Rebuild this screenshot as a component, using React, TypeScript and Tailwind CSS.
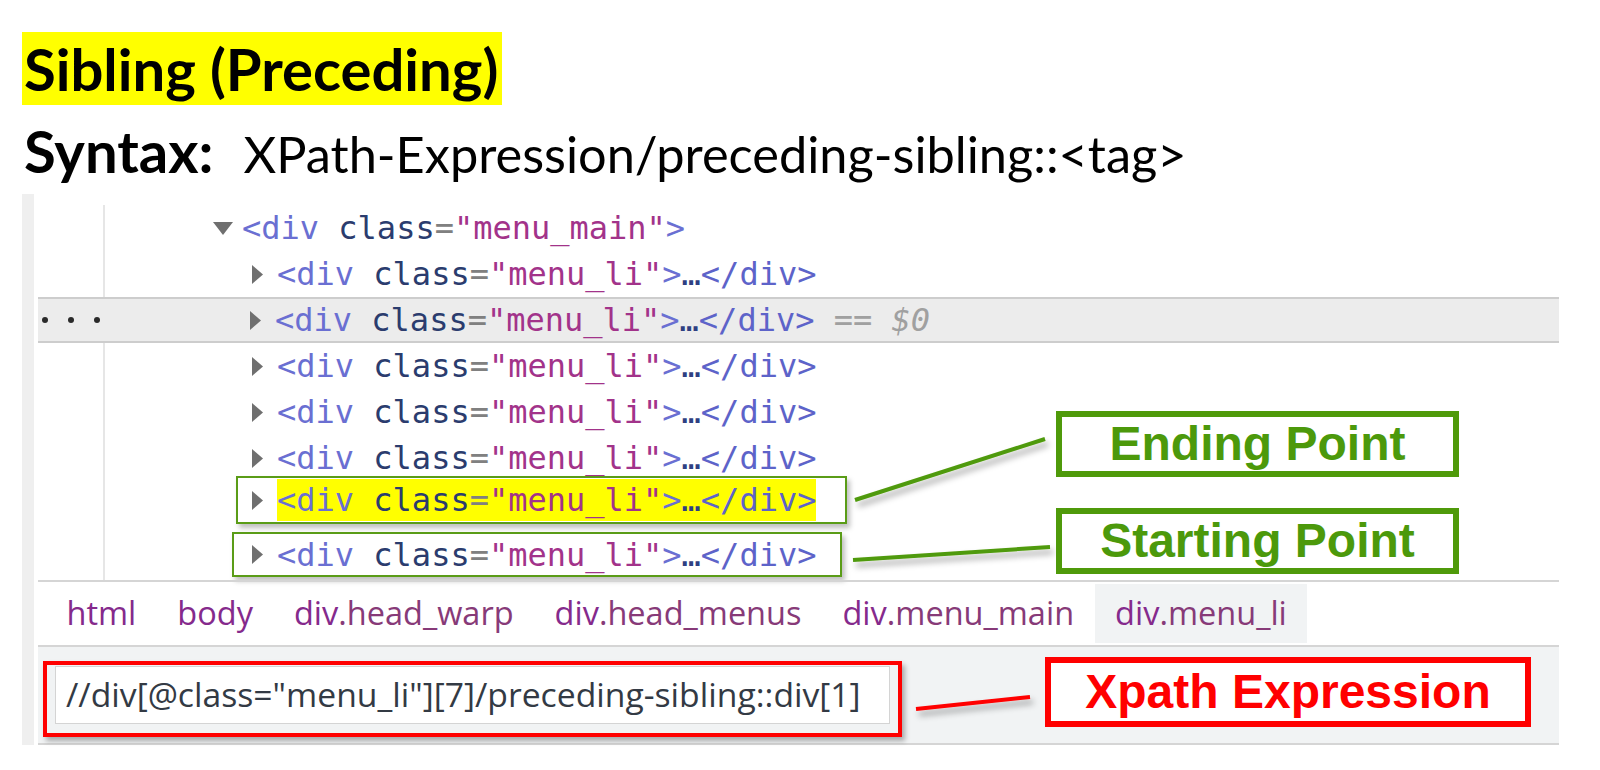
import React from "react";

// Devtools screenshot with annotations: preceding-sibling example.

const MONO = "font-['DejaVu_Sans_Mono',monospace] text-[32px] leading-none whitespace-pre";

function Down() {
  return (
    <svg width="20" height="13" viewBox="0 0 20 13" className="shrink-0">
      <polygon points="0,0 20,0 10,13" fill="#6f6f6f" />
    </svg>
  );
}

function Right() {
  return (
    <svg width="11" height="19" viewBox="0 0 11 19" className="shrink-0">
      <polygon points="0,0 11,9.5 0,19" fill="#6f6f6f" />
    </svg>
  );
}

function OpenTag({ name }: { name: string }) {
  return (
    <>
      <span className="text-[#6a6fd2]">&lt;div</span>{" "}
      <span className="text-[#2b3c6e]">class</span>
      <span className="text-[#808080]">=</span>
      <span className="text-[#a2338a]">"{name}"</span>
      <span className="text-[#6a6fd2]">&gt;</span>
    </>
  );
}

function LiText({ yellow }: { yellow?: boolean }) {
  return (
    <span className={yellow ? `${MONO} bg-[#ffff00] py-[5px]` : MONO}>
      <OpenTag name="menu_li" />
      <span className="text-[#2f3f82]">…</span>
      <span className="text-[#5d63c9]">&lt;/div&gt;</span>
    </span>
  );
}

function Row({
  selected,
  children,
}: {
  selected?: boolean;
  children: React.ReactNode;
}) {
  return (
    <div
      className={
        selected
          ? "flex h-[46px] border-y-2 border-[#cdcdcd] bg-[#ececec]"
          : "flex h-[46px]"
      }
    >
      <div className="flex w-[65px] items-center gap-[20px] pl-[4px]">
        {selected && (
          <>
            <span className="h-[6px] w-[6px] rounded-full bg-[#2a2a2a]" />
            <span className="h-[6px] w-[6px] rounded-full bg-[#2a2a2a]" />
            <span className="h-[6px] w-[6px] rounded-full bg-[#2a2a2a]" />
          </>
        )}
      </div>
      <div
        className={
          selected
            ? "flex flex-1 items-center border-l-2 border-transparent"
            : "flex flex-1 items-center border-l-2 border-[#e6e6e6]"
        }
      >
        {children}
      </div>
    </div>
  );
}

function Crumb({ tag, cls, active }: { tag: string; cls?: string; active?: boolean }) {
  return (
    <div
      className={
        active
          ? "flex h-[59px] items-center bg-[#f1f3f4] px-[20.5px]"
          : "flex h-[59px] items-center px-[20.5px]"
      }
    >
      <span className="text-[#852a8c]">{tag}</span>
      {cls && <span className="text-[#873a78]">{cls}</span>}
    </div>
  );
}

function Panel() {
  return (
    <div className="flex h-[551px]">
      <div className="w-[12px] bg-[#efefef]" />
      <div className="w-[4px]" />
      <div className="flex w-[1521px] flex-col">
        {/* elements tree */}
        <div className="flex h-[386px] flex-col pt-[11px]">
          <Row>
            <div className="flex items-center gap-[9px] pl-[108px]">
              <Down />
              <span className={MONO}>
                <OpenTag name="menu_main" />
              </span>
            </div>
          </Row>
          <Row>
            <div className="flex items-center gap-[14px] pl-[147px]">
              <Right />
              <LiText />
            </div>
          </Row>
          <Row selected>
            <div className="flex items-center gap-[14px] pl-[145px]">
              <Right />
              <LiText />
              <span className={`${MONO} -ml-[14px] italic text-[#a0a0a0]`}> == $0</span>
            </div>
          </Row>
          <Row>
            <div className="flex items-center gap-[14px] pl-[147px]">
              <Right />
              <LiText />
            </div>
          </Row>
          <Row>
            <div className="flex items-center gap-[14px] pl-[147px]">
              <Right />
              <LiText />
            </div>
          </Row>
          <Row>
            <div className="flex items-center gap-[14px] pl-[147px]">
              <Right />
              <LiText />
            </div>
          </Row>
          <Row>
            <div className="mb-[8px] ml-[131px] flex h-[48px] items-center gap-[14px] border-2 border-[#5a9c17] bg-white pl-[14px] pr-[29px] shadow-[3px_4px_5px_rgba(0,0,0,0.25)]">
              <Right />
              <LiText yellow />
            </div>
          </Row>
          <Row>
            <div className="mt-[9px] ml-[127px] flex h-[45px] items-center gap-[14px] border-2 border-[#5a9c17] bg-white pl-[18px] pr-[24px] shadow-[3px_4px_5px_rgba(0,0,0,0.25)]">
              <Right />
              <LiText />
            </div>
          </Row>
          <div className="flex flex-1">
            <div className="w-[65px]" />
            <div className="flex-1 border-l-2 border-[#e6e6e6]" />
          </div>
        </div>

        {/* breadcrumbs */}
        <div className="flex h-[65px] items-end border-t-2 border-[#d5d5d5] pb-[2px] pl-[8px] font-['Open_Sans',sans-serif] text-[32.5px] leading-none">
          <Crumb tag="html" />
          <Crumb tag="body" />
          <Crumb tag="div" cls=".head_warp" />
          <Crumb tag="div" cls=".head_menus" />
          <Crumb tag="div" cls=".menu_main" />
          <Crumb tag="div" cls=".menu_li" active />
        </div>

        {/* xpath search bar */}
        <div className="flex-1 border-y-2 border-[#d5d5d5] bg-[#f1f3f4] pl-[5px] pt-[14px]">
          <div className="h-[76px] w-[859px] border-4 border-[#ff0000] bg-[#f1f3f4] px-[8px] pt-[1px] shadow-[3px_4px_5px_rgba(0,0,0,0.3)]">
            <div className="flex h-[58px] items-center border border-[#d4d4d4] bg-white pl-[10px] font-['Open_Sans',sans-serif] text-[33.7px] leading-none text-[#333a44]">
              //div[@class="menu_li"][7]/preceding-sibling::div[1]
            </div>
          </div>
        </div>
      </div>
    </div>
  );
}

function Callouts() {
  return (
    <>
      <svg
        className="pointer-events-none absolute left-0 top-0"
        width="1600"
        height="770"
      >
        <defs>
          <filter
            id="sh"
            filterUnits="userSpaceOnUse"
            x="0"
            y="0"
            width="1600"
            height="770"
          >
            <feDropShadow dx="3" dy="5" stdDeviation="3" floodColor="#000" floodOpacity="0.35" />
          </filter>
        </defs>
        <line x1="855" y1="500" x2="1045" y2="439" stroke="#4f9a0a" strokeWidth="4" filter="url(#sh)" />
        <line x1="853" y1="560" x2="1050" y2="547" stroke="#4f9a0a" strokeWidth="4" filter="url(#sh)" />
        <line x1="916" y1="709" x2="1030" y2="697" stroke="#ff0000" strokeWidth="4" filter="url(#sh)" />
      </svg>
      <div className="absolute left-[1056px] top-[411px] flex h-[66px] w-[403px] items-center justify-center border-[6px] border-[#4f9a0a] bg-white font-['Liberation_Sans',sans-serif] text-[48px] font-bold leading-none text-[#4c990b]">
        Ending Point
      </div>
      <div className="absolute left-[1056px] top-[508px] flex h-[66px] w-[403px] items-center justify-center border-[6px] border-[#4f9a0a] bg-white font-['Liberation_Sans',sans-serif] text-[48px] font-bold leading-none text-[#4c990b]">
        Starting Point
      </div>
      <div className="absolute left-[1045px] top-[657px] flex h-[70px] w-[486px] items-center justify-center border-[6px] border-[#ff0000] bg-white font-['Liberation_Sans',sans-serif] text-[48px] font-bold leading-none text-[#ff0000]">
        Xpath Expression
      </div>
    </>
  );
}

export default function App() {
  return (
    <div className="relative h-[770px] w-[1600px] overflow-hidden bg-white">
      <div className="pl-[22px] pt-[32px]">
        <div className="flex h-[73px] w-[480px] items-center bg-[#ffff00] pl-[2px] font-['Lato',sans-serif] text-[58px] font-bold leading-none text-black">
          Sibling (Preceding)
        </div>
        <div className="flex h-[89px] items-baseline gap-[30px] pl-[2px] pt-[17px] font-['Lato',sans-serif] leading-none text-black">
          <span className="text-[58px] font-bold">Syntax:</span>
          <span className="text-[50.5px]">XPath-Expression/preceding-sibling::&lt;tag&gt;</span>
        </div>
        <Panel />
      </div>
      <Callouts />
    </div>
  );
}
